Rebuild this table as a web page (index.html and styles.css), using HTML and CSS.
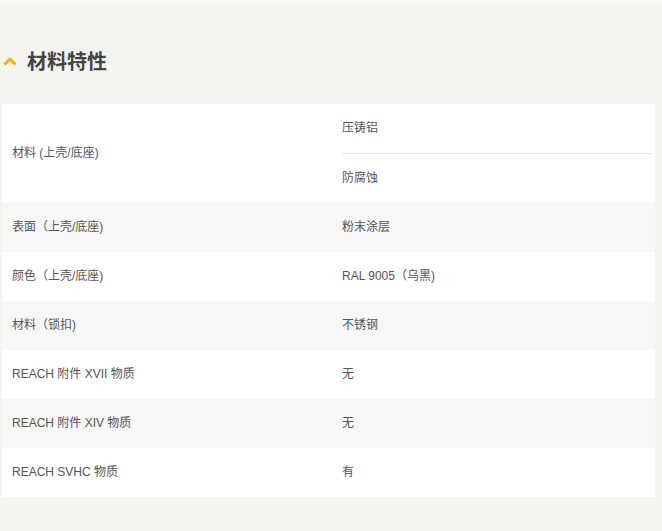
FILE: index.html
```html
<!DOCTYPE html>
<html lang="zh-CN">
<head>
<meta charset="utf-8">
<link rel="stylesheet" href="styles.css">
</head>
<body>
<div class="topbar"></div>
<section class="section">
  <h2 class="heading">
    <svg class="chev" width="14" height="10" viewBox="0 0 14 10"><path d="M1.5 8.5 L7 3 L12.5 8.5" fill="none" stroke="#f5b400" stroke-width="3"/></svg>
    <span>材料特性</span>
  </h2>
  <div class="table">
    <div class="row white">
      <div class="key">材料 (上壳/底座)</div>
      <div class="val multi">
        <div class="sub">压铸铝</div>
        <div class="sub">防腐蚀</div>
      </div>
    </div>
    <div class="row gray">
      <div class="key">表面（上壳/底座)</div>
      <div class="val">粉末涂层</div>
    </div>
    <div class="row white">
      <div class="key">颜色（上壳/底座)</div>
      <div class="val">RAL 9005（乌黑)</div>
    </div>
    <div class="row gray">
      <div class="key">材料（锁扣)</div>
      <div class="val">不锈钢</div>
    </div>
    <div class="row white">
      <div class="key">REACH 附件 XVII 物质</div>
      <div class="val">无</div>
    </div>
    <div class="row gray">
      <div class="key">REACH 附件 XIV 物质</div>
      <div class="val">无</div>
    </div>
    <div class="row white">
      <div class="key">REACH SVHC 物质</div>
      <div class="val">有</div>
    </div>
  </div>
</section>
</body>
</html>
```
FILE: styles.css
```css
html, body {
  margin: 0;
  padding: 0;
}
body {
  background: #f5f4f0;
  font-family: "Liberation Sans", "Noto Sans CJK SC", sans-serif;
  color: #555;
  font-size: 12px;
}
.topbar {
  height: 5px;
  background: #f8f8f7;
}
.section {
  padding: 0 7px 0 2px;
}
.heading {
  margin: 0;
  padding: 42px 0 29px 1px;
  height: 28px;
  display: flex;
  align-items: center;
  gap: 10px;
  font-size: 20px;
  font-weight: bold;
  color: #444;
  font-family: "Noto Sans CJK SC", sans-serif;
  line-height: 28px;
}
.chev {
  display: block;
}
.table {
  display: flex;
  flex-direction: column;
}
.row {
  display: grid;
  grid-template-columns: 330px 1fr;
  min-height: 49px;
}
.row.white { background: #ffffff; }
.row.gray { background: #f7f7f5; }
.key, .val {
  display: flex;
  align-items: center;
  padding-left: 10px;
  line-height: 49px;
}
.val {
  padding-right: 3px;
}
.val.multi {
  flex-direction: column;
  align-items: stretch;
}
.sub {
  height: 49px;
  line-height: 49px;
}
.sub + .sub {
  border-top: 1px solid #e6e6e6;
}
```
